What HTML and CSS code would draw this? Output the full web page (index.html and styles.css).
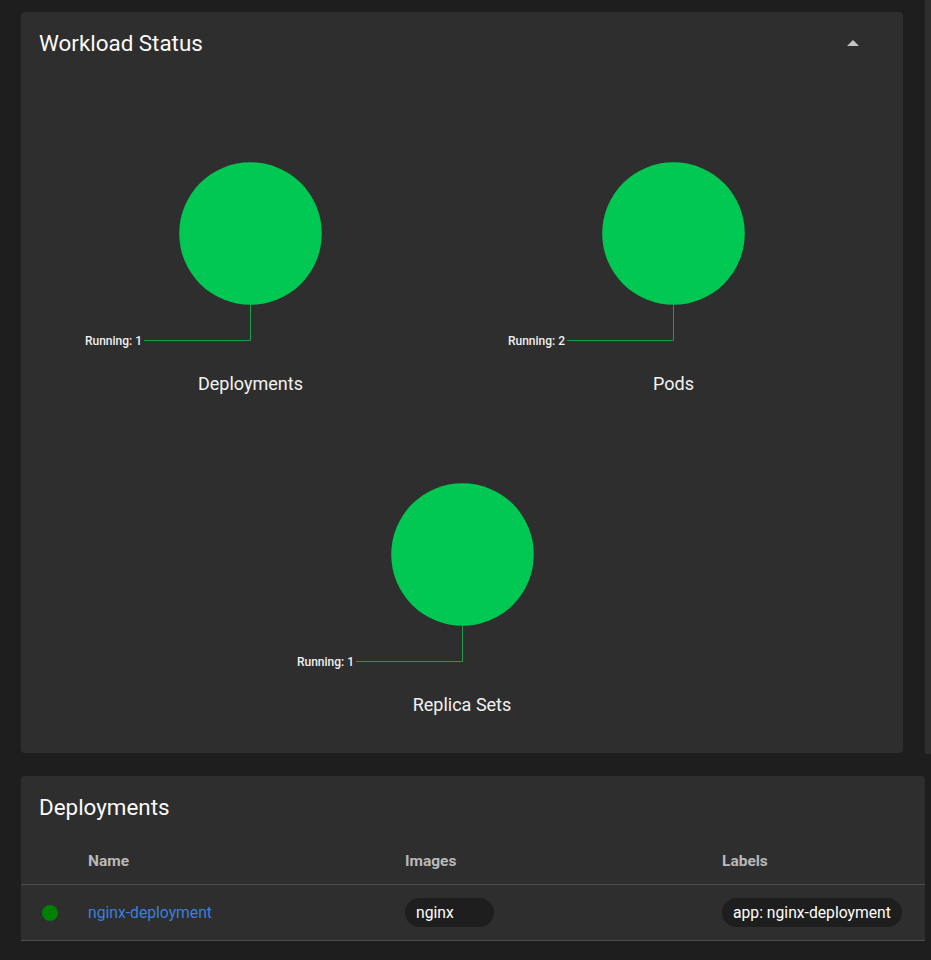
FILE: index.html
```html
<!DOCTYPE html>
<html lang="en">
<head>
    <meta charset="UTF-8">
    <meta name="viewport" content="width=device-width, initial-scale=1.0">
    <title>Workload Status</title>
    <link rel="stylesheet" href="styles.css">
</head>
<body>
    <div class="main">
        <div class="card status-card">
            <div class="card-header">
                <h2>Workload Status</h2>
                <button class="collapse-btn" aria-label="Collapse">
                    <svg width="12" height="6" viewBox="0 0 12 6"><polygon points="0,6 6,0 12,6" fill="#c4c4c4"/></svg>
                </button>
            </div>

            <div class="charts">
                <div class="chart">
                    <svg class="pie" width="423" height="282" viewBox="0 0 423 282">
                        <circle cx="211.5" cy="143.5" r="71.3" fill="#00c853"/>
                        <polyline points="211.5,214,211.5,250.5,105,250.5" fill="none" stroke="#1a9e46" stroke-width="1"/>
                        <text x="103" y="254.5" text-anchor="end">Running: 1</text>
                    </svg>
                    <div class="chart-label">Deployments</div>
                </div>
                <div class="chart">
                    <svg class="pie" width="423" height="282" viewBox="0 0 423 282">
                        <circle cx="211.5" cy="143.5" r="71.3" fill="#00c853"/>
                        <polyline points="211.5,214,211.5,250.5,105,250.5" fill="none" stroke="#1a9e46" stroke-width="1"/>
                        <text x="103" y="254.5" text-anchor="end">Running: 2</text>
                    </svg>
                    <div class="chart-label">Pods</div>
                </div>
                <div class="chart wide">
                    <svg class="pie" width="423" height="282" viewBox="0 0 423 282">
                        <circle cx="211.5" cy="143.5" r="71.3" fill="#00c853"/>
                        <polyline points="211.5,214,211.5,250.5,105,250.5" fill="none" stroke="#1a9e46" stroke-width="1"/>
                        <text x="103" y="254.5" text-anchor="end">Running: 1</text>
                    </svg>
                    <div class="chart-label">Replica Sets</div>
                </div>
            </div>
        </div>

        <div class="card list-card">
            <div class="card-header">
                <h2>Deployments</h2>
            </div>
            <div class="table">
                <div class="row head">
                    <div></div>
                    <div>Name</div>
                    <div>Images</div>
                    <div>Labels</div>
                </div>
                <div class="row">
                    <div><span class="dot"></span></div>
                    <div><a href="#" class="link">nginx-deployment</a></div>
                    <div><span class="chip">nginx</span></div>
                    <div><span class="chip">app: nginx-deployment</span></div>
                </div>
            </div>
        </div>
    </div>
    <div class="scroll-track"></div>
</body>
</html>
```

FILE: styles.css
```css
body {
    margin: 0;
    font-family: Roboto, "Liberation Sans", sans-serif;
    background-color: #1e1e1e;
    color: #f2f2f2;
    display: flex;
    align-items: flex-start;
    height: 960px;
    overflow: hidden;
}

.main {
    width: 904px;
    padding: 12px 0 0 21px;
    flex-shrink: 0;
}

.scroll-track {
    width: 6px;
    height: 754px;
    background-color: #2e2e2e;
}

.card {
    background-color: #2e2e2e;
    border-radius: 4px;
}

.status-card {
    width: 882px;
    padding-bottom: 36px;
}

.list-card {
    width: 904px;
    margin-top: 23px;
    border-radius: 4px 4px 0 0;
}

.card-header {
    height: 62px;
    padding: 0 18px;
    display: flex;
    align-items: center;
    justify-content: space-between;
}

.card-header h2 {
    margin: 0;
    font-size: 22.4px;
    font-weight: 400;
    color: #fafafa;
}

.collapse-btn {
    background: none;
    border: none;
    padding: 0;
    margin-right: 20px;
    width: 24px;
    height: 24px;
    display: flex;
    align-items: center;
    justify-content: center;
    cursor: pointer;
}

.charts {
    padding: 16px 18px 0 18px;
    display: grid;
    grid-template-columns: 423px 423px;
    row-gap: 15px;
}

.chart {
    width: 423px;
}

.chart.wide {
    grid-column: 1 / -1;
    justify-self: center;
}

.pie {
    display: block;
}

.pie text {
    font-family: Roboto, "Liberation Sans", sans-serif;
    font-size: 12px;
    font-weight: 500;
    fill: #f0f0f0;
}

.chart-label {
    text-align: center;
    font-size: 18px;
    line-height: 24px;
    color: #f2f2f2;
}

.table {
    width: 100%;
}

.row {
    display: grid;
    grid-template-columns: 67px 317px 317px 1fr;
    align-items: center;
    border-bottom: 1px solid #4d4d4d;
}

.row.head {
    height: 46px;
    font-size: 15.5px;
    font-weight: 700;
    color: #b8b8b8;
}

.row:not(.head) {
    height: 55px;
    font-size: 15.7px;
}

.dot {
    display: block;
    width: 16px;
    height: 16px;
    border-radius: 50%;
    background-color: #008000;
    margin-left: 21px;
}

.link {
    color: #3d7fdc;
    text-decoration: none;
}

.chip {
    display: inline-flex;
    align-items: center;
    box-sizing: border-box;
    min-width: 89px;
    height: 29px;
    padding: 0 11px;
    border-radius: 15px;
    background-color: #1e1e1e;
    color: #ffffff;
}
```
